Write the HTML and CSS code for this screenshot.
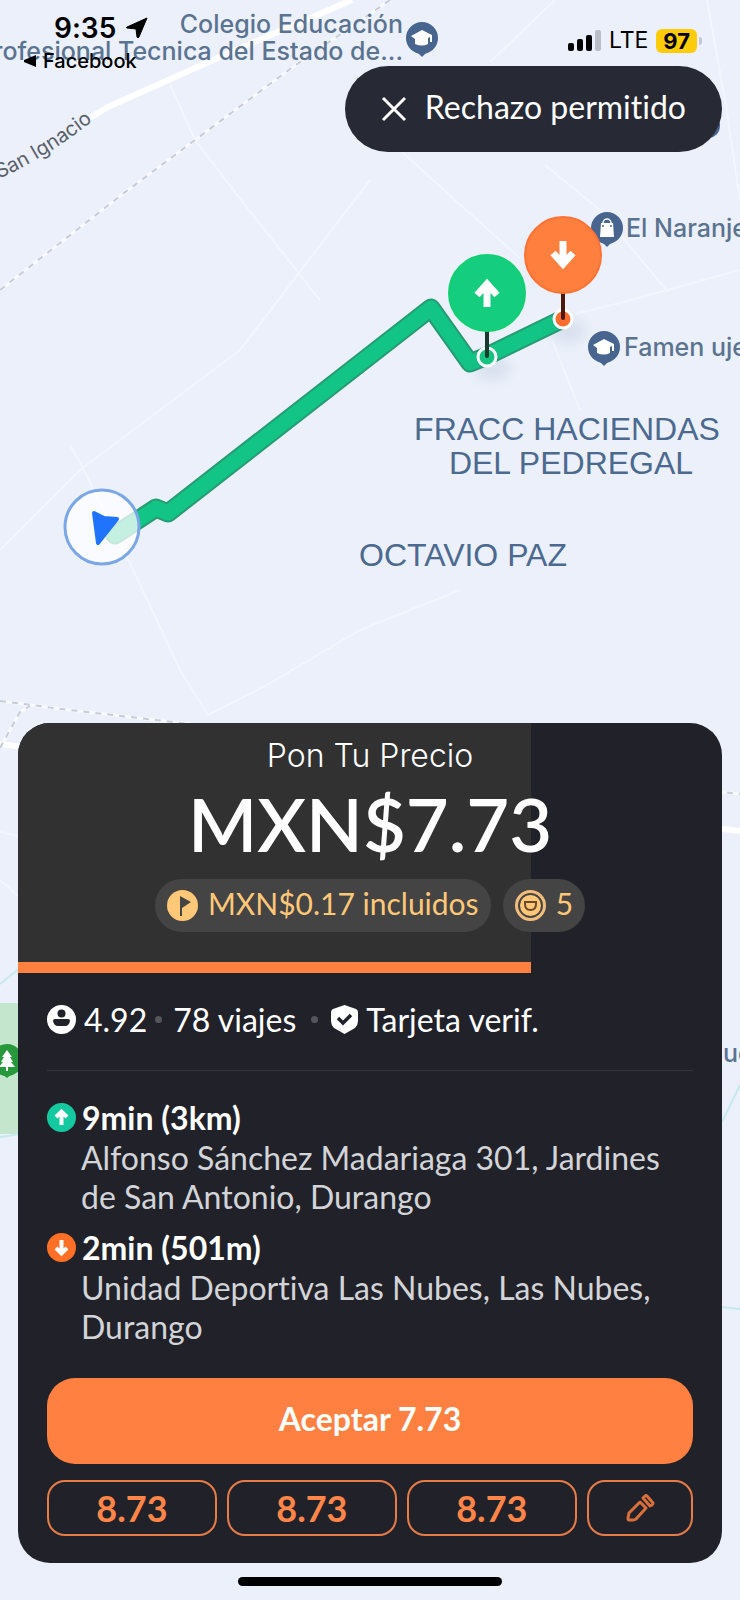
FILE: index.html
```html
<!DOCTYPE html>
<html lang="es">
<head>
    <meta charset="UTF-8">
    <meta name="viewport" content="width=device-width, initial-scale=1.0">
    <title>Pon Tu Precio</title>
    <link rel="stylesheet" href="styles.css">
</head>
<body>
    <div class="screen">
        <svg class="map" viewBox="0 0 740 1600" preserveAspectRatio="xMidYMin slice" role="img" aria-label="Mapa">
            <defs>
                <g id="school">
                    <path d="M-5 14 L0 19 L5 14Z" fill="#47658f"/>
                    <circle r="16" fill="#47658f"/>
                    <path d="M-11 -2 L0 -8 L10 -3 V4 H8 V-1 L6 0 V6 Q0 9 -7 6 V1Z" fill="#fff"/>
                </g>
                <path id="street" d="M-32 191 Q30 170 93 121"/>
            </defs>

            <!-- park -->
            <path d="M0 1003 H60 V1134 H0Z" fill="#c3e6cd"/>
            <path d="M0 984 L20 968 M0 1137 Q12 1136 20 1133 M722 1122 L740 1085 M722 1307 L740 1309" class="water"/>

            <!-- streets -->
            <g class="minor">
                <path d="M170 84 L195 140 L245 205 L320 300"/>
                <path d="M490 62 L555 0 M707 0 L725 100 L740 200"/>
                <path d="M400 150 L455 200 L520 258 M552 340 L580 410"/>
                <path d="M545 165 L600 210 L668 292 M0 550 L80 470 L240 350 L370 180"/>
                <path d="M575 314 L620 303 L740 270"/>
                <path d="M70 445 L84 470 L138 580 L180 670 L208 715 L265 686 L360 630 L460 590"/>
                <path d="M0 832 L20 836 M0 880 L20 898"/>
            </g>
            <path class="main-road" d="M88 119 L108 107 L222 56 L352 0"/>
            <path class="main-road" d="M0 744 L30 748 M715 828 L740 831"/>
            <g class="rail-base">
                <path d="M390 0 L290 69 L195 140 L120 196 L0 290"/>
                <path d="M0 701 L70 710 L190 724 M0 748 L20 712 L30 706 M715 791 L740 794"/>
            </g>
            <g class="rail">
                <path d="M390 0 L290 69 L195 140 L120 196 L0 290"/>
                <path d="M0 701 L70 710 L190 724 M0 748 L20 712 L30 706 M715 791 L740 794"/>
            </g>

            <!-- places -->
            <g class="place">
                <text x="403" y="33" text-anchor="end">Colegio Educación</text>
                <text x="403" y="60" text-anchor="end">Profesional Tecnica del Estado de...</text>
                <text x="626" y="237">El Naranjero</text>
                <text x="624" y="356">Famen ujed</text>
                <text x="723" y="1062">ue</text>
            </g>
            <text class="street-name" text-anchor="end"><textPath href="#street" startOffset="100%">San Ignacio</textPath></text>
            <g class="district">
                <text x="567" y="440">FRACC HACIENDAS</text>
                <text x="571" y="474">DEL PEDREGAL</text>
                <text x="463" y="566">OCTAVIO PAZ</text>
            </g>

            <use href="#school" x="422" y="38"/>
            <use href="#school" x="604" y="347"/>
            <circle cx="708" cy="126" r="12" fill="#47658f"/>
            <g transform="translate(607 228)">
                <path d="M-5 14 L0 19 L5 14Z" fill="#47658f"/>
                <circle r="16" fill="#47658f"/>
                <path d="M-6 -5 H6 L7 9 H-7Z" fill="#fff"/>
                <path d="M-4 -3 V-5 A4 4 0 0 1 4 -5 V-3" fill="none" stroke="#fff" stroke-width="1.5"/>
                <circle cx="-4" cy="-2" r="1" fill="#47658f"/>
                <circle cx="4" cy="-2" r="1" fill="#47658f"/>
            </g>
            <g transform="translate(7 1060)">
                <path d="M-6 13 L0 18 L6 13Z" fill="#27983b"/>
                <circle r="16" fill="#27983b"/>
                <path d="M0 -10 L5 -3 H3 L6 2 H4 L8 7 H1 V11 H-1 V7 H-8 L-4 2 H-6 L-3 -3 H-5Z" fill="#fff"/>
            </g>

            <!-- route -->
            <path class="route-edge" d="M115 535 L156 508 L168 513 L431 308 L470 363 L487 356 L563 319"/>
            <path class="route" d="M115 535 L156 508 L168 513 L431 308 L470 363 L487 356 L563 319"/>

            <!-- current position -->
            <circle cx="102" cy="527" r="37" fill="#fff" fill-opacity=".75" stroke="#7ba7e9" stroke-width="3"/>
            <path d="M94 513 L104 518 L117 519 L98 543Z" fill="#1f74fb" stroke="#1f74fb" stroke-width="4" stroke-linejoin="round"/>

            <!-- pick up -->
            <ellipse cx="492" cy="368" rx="18" ry="12" class="pin-shadow"/>
            <circle cx="487" cy="357" r="9" fill="#14c481" stroke="#fff" stroke-width="3"/>
            <path d="M487 330 V356" stroke="#173a2c" stroke-width="4" stroke-linecap="round"/>
            <circle cx="487" cy="293" r="38" fill="#15cd7e" stroke="#12d071" stroke-width="2"/>
            <path d="M487 307 V287 M477 295 L487 284 L497 295" class="pin-arrow"/>

            <!-- drop off -->
            <ellipse cx="568" cy="331" rx="18" ry="12" class="pin-shadow"/>
            <circle cx="563" cy="319" r="9" fill="#ff6d2e" stroke="#fff" stroke-width="3"/>
            <path d="M563 292 V318" stroke="#4a1a0c" stroke-width="4" stroke-linecap="round"/>
            <circle cx="563" cy="255" r="38" fill="#ff7f3f" stroke="#ff7133" stroke-width="2"/>
            <path d="M563 241 V261 M553 253 L563 264 L573 253" class="pin-arrow"/>
        </svg>

        <header class="status-bar">
            <div class="status-left">
                <div class="clock">
                    9:35
                    <svg width="22" height="22" viewBox="0 0 22 22"><path d="M21 1 L1 10 Q0 11 1 11 L10 12 L11 20 Q12 22 13 20Z" stroke="#000" stroke-linejoin="round"/></svg>
                </div>
                <a class="back-link" href="#">
                    <svg width="12" height="12" viewBox="0 0 12 12"><path d="M12 0 V12 L0 7 V5Z"/></svg>
                    Facebook
                </a>
            </div>
            <div class="status-right">
                <svg width="33" height="21" viewBox="0 0 33 21">
                    <rect x="0" y="13" width="6" height="8" rx="2"/>
                    <rect x="9" y="9" width="6" height="12" rx="2"/>
                    <rect x="18" y="5" width="6" height="16" rx="2"/>
                    <rect x="27" y="0" width="6" height="21" rx="2" fill="#b9bdc6"/>
                </svg>
                <span>LTE</span>
                <span class="battery">97</span>
            </div>
        </header>

        <button class="reject-btn" type="button">
            <svg width="26" height="26" viewBox="0 0 26 26"><path d="M2 2 L24 24 M24 2 L2 24" fill="none" stroke="#fff" stroke-width="3"/></svg>
            <span class="label">Rechazo permitido</span>
        </button>

        <main class="card">
            <section class="offer">
                <div class="offer-progress" style="width: 72.9%"></div>
                <div class="offer-title">Pon Tu Precio</div>
                <h1 class="price">MXN$7.73</h1>
                <div class="pills">
                    <span class="pill">
                        <svg width="31" height="31" viewBox="0 0 31 31"><circle cx="15.500" cy="15.500" r="15.500" fill="#ffc878"/><path d="M13 6 L24 12 L15 18 V26 H13Z" fill="#444"/></svg>
                        <span class="label">MXN$0.17 incluidos</span>
                    </span>
                    <span class="pill">
                        <svg width="31" height="31" viewBox="0 0 31 31"><circle cx="15.500" cy="15.500" r="14" fill="none" stroke="#f2bd7c" stroke-width="3"/><circle cx="15.500" cy="15.500" r="10.500" fill="#ffc878"/><path d="M10 12 H21 V14 Q21 20 15.500 20 Q10 20 10 14Z" fill="#ffc878" stroke="#6b4a2c" stroke-width="2"/></svg>
                        <span class="label">5</span>
                    </span>
                </div>
            </section>

            <div class="details">
                <div class="rider">
                    <svg width="29" height="29" viewBox="0 0 29 29"><circle cx="14.500" cy="14.500" r="14.500" fill="#fff"/><circle cx="14.500" cy="8.500" r="4" fill="#212229"/><path d="M8 14 H21 Q23 14 23 16 Q22 21 18 21 H11 Q7 21 6 16 Q6 14 8 14Z" fill="#212229"/></svg>
                    <span>4.92</span>
                    <i class="dot"></i>
                    <span class="trips">78 viajes</span>
                    <i class="dot"></i>
                    <svg class="shield" width="27" height="29" viewBox="0 0 27 29"><path d="M13.500 0 L25 4 Q27 5 27 7 V16 Q27 20 24 23 L13.500 29 L3 23 Q0 20 0 16 V7 Q0 5 2 4Z" fill="#fff"/><path d="M7 13 L12 18 L20 10" fill="none" stroke="#212229" stroke-width="3.500"/></svg>
                    <span>Tarjeta verif.</span>
                </div>

                <ul class="stops">
                    <li class="stop">
                        <svg width="29" height="29" viewBox="0 0 29 29"><circle cx="14.500" cy="14.500" r="14.500" fill="#14c9a0"/><path d="M14.500 22 V9 M9 14 L14.500 8.500 L20 14" class="stop-arrow"/></svg>
                        <h2>9min (3km)</h2>
                        <p>Alfonso Sánchez Madariaga 301, Jardines de San Antonio, Durango</p>
                    </li>
                    <li class="stop">
                        <svg width="29" height="29" viewBox="0 0 29 29"><circle cx="14.500" cy="14.500" r="14.500" fill="#ff6f26"/><path d="M14.500 7 V20 M9 15 L14.500 20.500 L20 15" class="stop-arrow"/></svg>
                        <h2>2min (501m)</h2>
                        <p>Unidad Deportiva Las Nubes, Las Nubes, Durango</p>
                    </li>
                </ul>

                <button class="accept-btn" type="button"><span class="label">Aceptar 7.73</span></button>
                <div class="counter-offers">
                    <button type="button">8.73</button>
                    <button type="button">8.73</button>
                    <button type="button">8.73</button>
                    <button type="button" aria-label="Editar precio">
                        <svg width="30" height="30" viewBox="0 0 30 30" fill="none" stroke="#d9703c" stroke-width="3" stroke-linejoin="round"><path d="M15 9 L21 15 L11 26 Q10 27 8 27 L4 27 Q3 27 3 25 L4 20Z"/><path d="M18 5 L20 3 Q21 2 22 3 L28 10 Q28 11 27 12 L25 13Z"/></svg>
                    </button>
                </div>
            </div>
        </main>

        <div class="home-indicator"></div>
    </div>
</body>
</html>
```

FILE: styles.css
```css
* {
    margin: 0;
    padding: 0;
    box-sizing: border-box;
}

body {
    font-family: Lato, "Open Sans", sans-serif;
    font-size: 32px;
    line-height: 39px;
    font-variant-ligatures: none;
    color: #fff;
    background: #ebf0fa;
}

button {
    font: inherit;
    color: inherit;
    border: none;
    cursor: pointer;
}

svg {
    flex: none;
}

.screen {
    position: relative;
    display: flex;
    flex-direction: column;
    min-height: 100vh;
    padding: 0 18px 14px;
    overflow: hidden;
}

/* map */
.map {
    position: absolute;
    inset: 0;
    width: 100%;
    height: 100%;
}

.minor {
    fill: none;
    stroke: #f2f6fd;
    stroke-width: 2;
}

.main-road {
    fill: none;
    stroke: #fff;
    stroke-width: 6;
}

.water {
    fill: none;
    stroke: #c5e9ef;
    stroke-width: 2;
}

.rail-base,
.rail {
    fill: none;
    stroke: #f8fafd;
    stroke-width: 3;
}

.rail {
    stroke: #c6ccd8;
    stroke-width: 2;
    stroke-dasharray: 6 6;
}

.place,
.street-name {
    font-family: Inter, sans-serif;
    font-size: 25px;
    font-weight: 500;
    fill: #5a7390;
}

.street-name {
    font-size: 20px;
    font-weight: 400;
    fill: #596069;
}

.district {
    font-family: "Liberation Sans", Arial, sans-serif;
    font-size: 32px;
    fill: #4c6a90;
    text-anchor: middle;
}

.route-edge,
.route {
    fill: none;
    stroke: #279b71;
    stroke-width: 19;
    stroke-linecap: round;
    stroke-linejoin: round;
}

.route {
    stroke: #12c485;
    stroke-width: 15;
}

.pin-shadow {
    fill: #47658f;
    opacity: 0.1;
    filter: blur(6px);
}

.pin-arrow {
    fill: none;
    stroke: #fff;
    stroke-width: 7;
}

/* status bar */
.status-bar {
    position: relative;
    display: flex;
    justify-content: space-between;
    height: 66px;
    padding: 10px 25px 0 6px;
    font-family: Inter, sans-serif;
    color: #000;
}

.clock {
    display: flex;
    align-items: center;
    gap: 10px;
    padding-left: 30px;
    font-size: 28px;
    font-weight: 600;
    line-height: 36px;
}

.back-link {
    display: flex;
    align-items: center;
    gap: 7px;
    font-size: 20px;
    font-weight: 500;
    line-height: 30px;
    color: #000;
    text-decoration: none;
}

.status-right {
    display: flex;
    align-items: center;
    gap: 8px;
    height: 61px;
    font-size: 23px;
}

.battery {
    position: relative;
    padding: 0 7px;
    border-radius: 6px;
    background: #fccc0a;
    font-size: 22px;
    font-weight: 700;
    line-height: 24px;
}

.battery::after {
    content: "";
    position: absolute;
    top: 8px;
    right: -5px;
    width: 3px;
    height: 8px;
    border-radius: 0 3px 3px 0;
    background: #c3c8d2;
}

.label {
    display: block;
    padding-bottom: 5px;
}

.reject-btn {
    position: relative;
    display: flex;
    align-items: center;
    align-self: flex-end;
    gap: 18px;
    height: 86px;
    padding: 0 36px;
    border-radius: 43px;
    background: #272a34;
}

/* bottom card */
.card {
    position: relative;
    margin-top: auto;
    border-radius: 32px;
    background: #212229;
    overflow: hidden;
}

.offer {
    position: relative;
    display: flex;
    flex-direction: column;
    align-items: center;
    height: 250px;
    padding-top: 13px;
}

/* remaining time, drawn behind the price */
.offer-progress {
    position: absolute;
    top: 0;
    bottom: 0;
    left: 0;
    background: #303130;
    border-bottom: 11px solid #ff8040;
}

.offer-title,
.price,
.pills {
    position: relative;
}

.offer-title {
    font-family: Inter, sans-serif;
    font-weight: 300;
}

.price {
    font-size: 74px;
    font-weight: 600;
    line-height: 98px;
}

.pills {
    display: flex;
    gap: 12px;
    margin-top: 6px;
}

.pill {
    display: flex;
    align-items: center;
    gap: 10px;
    height: 53px;
    padding: 0 12px;
    border-radius: 27px;
    background: #444;
    color: #ffc878;
    font-size: 30px;
}

.details {
    padding: 26px 29px 27px;
}

.rider {
    display: flex;
    align-items: center;
    gap: 8px;
    height: 72px;
    padding-bottom: 30px;
    border-bottom: 1px solid #35363c;
}

.trips {
    margin: 0 7px 0 3px;
}

.dot {
    width: 7px;
    height: 7px;
    border-radius: 50%;
    background: #55565c;
}

.shield {
    margin-left: 5px;
}

.stops {
    list-style: none;
    padding: 26px 0 32px;
}

.stop {
    display: grid;
    grid-template-columns: 29px 1fr;
    column-gap: 5px;
    align-items: center;
}

.stop + .stop {
    margin-top: 11px;
}

.stop h2 {
    padding-left: 1px;
    font-size: 32px;
    font-weight: 700;
    line-height: 41px;
}

.stop p {
    grid-column: 2;
    color: #d3d4d8;
}

.stop-arrow {
    fill: none;
    stroke: #fff;
    stroke-width: 4;
}

.accept-btn {
    display: block;
    width: 100%;
    height: 86px;
    border-radius: 28px;
    background: #ff8040;
    font-weight: 700;
}

.counter-offers {
    display: grid;
    grid-template-columns: 8fr 8fr 8fr 5fr;
    gap: 10px;
    margin-top: 16px;
}

.counter-offers button {
    display: flex;
    align-items: center;
    justify-content: center;
    height: 56px;
    border: 2px solid #e87c48;
    border-radius: 18px;
    background: transparent;
    color: #ff8548;
    font-size: 36px;
    font-weight: 700;
}

.home-indicator {
    position: relative;
    align-self: center;
    width: 37.5%;
    height: 9px;
    margin-top: 14px;
    border-radius: 5px;
    background: #000;
}
```
